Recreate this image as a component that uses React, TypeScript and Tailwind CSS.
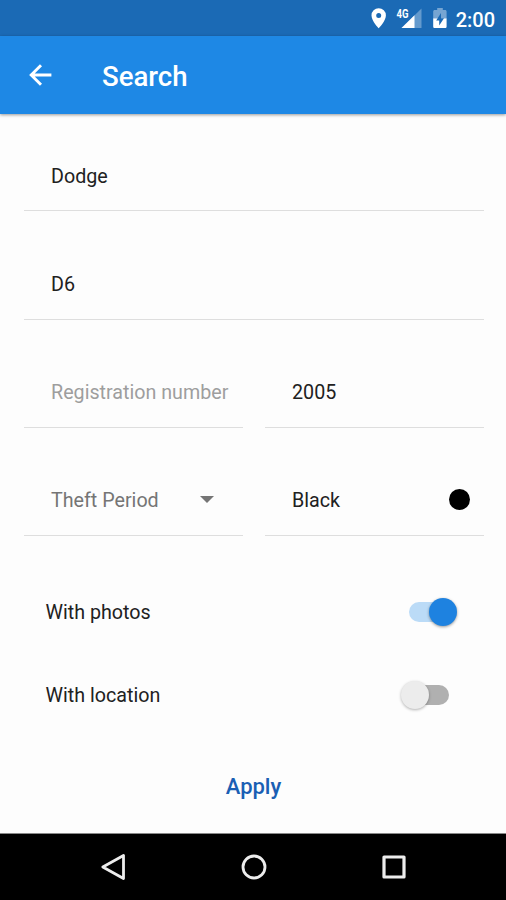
import type { ReactNode } from "react";

export default function App() {
    return (
        <div className="flex h-[900px] w-[506px] flex-col overflow-hidden bg-[#fdfdfd] font-['Roboto',sans-serif] text-[#212121]">
            <StatusBar />
            <Appbar />
            <main className="flex flex-1 flex-col">
                <form className="grid grid-cols-2 gap-x-[22px] pl-6 pr-[22px]">
                    <div className="col-span-2"><Field first><span className="pt-[3px]">Dodge</span></Field></div>
                    <div className="col-span-2"><Field><span className="pt-[3px]">D6</span></Field></div>
                    <Field><span className="pt-[3px] text-[#9e9e9e]">Registration number</span></Field>
                    <Field><span className="pt-[3px]">2005</span></Field>
                    <Field>
                        <span className="pt-[3px] text-[#757575]">Theft Period</span>
                        <svg className="mr-[29px]" width="14" height="7" viewBox="0 0 14 7">
                            <path d="M0 0h14L7 7z" fill="#757575" />
                        </svg>
                    </Field>
                    <Field>
                        <span className="pt-[3px]">Black</span>
                        <span className="mr-[14px] mb-px size-[21px] rounded-full bg-black" />
                    </Field>
                </form>
                <div className="mt-[34px] pl-[45.5px] pr-[57px]">
                    <ToggleRow label="With photos" on />
                    <ToggleRow label="With location" />
                </div>
                <button type="button" className="mt-[37px] ml-px self-center text-[22px] leading-7 font-medium text-[#1a5fb4]">
                    Apply
                </button>
            </main>
            <NavBar />
        </div>
    );
}

function StatusBar() {
    return (
        <div className="flex h-9 shrink-0 items-center justify-end bg-[#1b6ab5] pr-[11px] text-white">
            <svg width="80" height="36" viewBox="0 0 80 36">
                {/* location */}
                <path fillRule="evenodd" d="M9.7 8.2a7.2 7.2 0 0 0-7.2 7.2c0 5.3 7.2 12.8 7.2 12.8s7.2-7.5 7.2-12.8a7.2 7.2 0 0 0-7.2-7.2zm0 4.7a2.5 2.5 0 1 1 0 5 2.5 2.5 0 0 1 0-5z" fill="#fff" />
                {/* signal */}
                <path d="M52.5 8.5V28h-20z" fill="#fff" fillOpacity=".32" />
                <path d="M45.5 15.3V28h-13z" fill="#fff" />
                <path d="M26 7h15v7.5l-4 4H26z" fill="#1b6ab5" />
                <text x="27.5" y="17.5" fontSize="12" fontWeight="700" textLength="12" lengthAdjust="spacingAndGlyphs" fill="#fff">4G</text>
                {/* battery */}
                <path d="M68.2 8h5.6v2H76c1 0 1.6.6 1.6 1.6V19H64.2v-7.4c0-1 .6-1.6 1.6-1.6h2.4z" fill="#fff" fillOpacity=".4" />
                <path d="M64.2 18.5h13.4v8c0 1-.6 1.6-1.6 1.6H65.8c-1 0-1.6-.6-1.6-1.6z" fill="#fff" />
                <path d="M72 13l-4.8 7.4h3v5.1l4.8-7.3h-3z" fill="#1b6ab5" />
            </svg>
            <span className="ml-[7px] pt-[3px] text-[20px] leading-6 font-medium">2:00</span>
        </div>
    );
}

function Appbar() {
    return (
        <header className="flex h-[78px] shrink-0 items-center bg-[#1e88e5] text-white shadow-[0_1px_3px_rgba(0,0,0,0.4)]">
            <svg className="ml-[28px]" width="24" height="24" viewBox="0 0 24 24" fill="none" stroke="#fff" strokeWidth="2.9">
                <path d="M23.4 12H3M13 2.2L3.2 12l9.8 9.8" />
            </svg>
            <h1 className="ml-[50px] pt-[3px] text-[27.6px] font-medium">Search</h1>
        </header>
    );
}

function Field({ first, children }: { first?: boolean; children: ReactNode }) {
    return (
        <div className={first ? "flex h-[97.3px] flex-col justify-end" : "flex h-[108.3px] flex-col justify-end"}>
            <div className="flex h-[72px] items-center justify-between border-b-[1.5px] border-[#dedede] pl-[27px] text-[19.7px]">
                {children}
            </div>
        </div>
    );
}

function ToggleRow({ label, on }: { label: string; on?: boolean }) {
    return (
        <div className="flex h-[83px] items-center justify-between text-[19.7px]">
            <span className="pt-[3px]">{label}</span>
            <span className={on ? "relative h-5 w-10 rounded-full bg-[#bbdbf7]" : "relative h-5 w-10 rounded-full bg-[#b0b0b0]"}>
                <span className={on
                    ? "absolute -top-1 left-[20px] size-7 rounded-full bg-[#1e82e0] shadow-[0_1px_3px_rgba(0,0,0,0.4)]"
                    : "absolute -top-1 -left-2 size-7 rounded-full bg-[#ececec] shadow-[0_1px_3px_rgba(0,0,0,0.3)]"} />
            </span>
        </div>
    );
}

function NavBar() {
    return (
        <nav className="flex h-[67px] shrink-0 items-center justify-between border-t border-[#888] bg-black pl-[100px] pr-[99px]">
            <svg width="26" height="28" viewBox="0 0 26 28" fill="none" stroke="#ededed" strokeWidth="2.8" strokeLinejoin="round">
                <path d="M23.5 2.5v23L2.8 14z" />
            </svg>
            <svg width="28" height="28" viewBox="0 0 28 28" fill="none" stroke="#ededed" strokeWidth="2.8">
                <circle cx="14" cy="14" r="11" />
            </svg>
            <svg width="26" height="28" viewBox="0 0 26 28" fill="none" stroke="#ededed" strokeWidth="3.2" strokeLinejoin="round">
                <rect x="3" y="4" width="20" height="20" />
            </svg>
        </nav>
    );
}
